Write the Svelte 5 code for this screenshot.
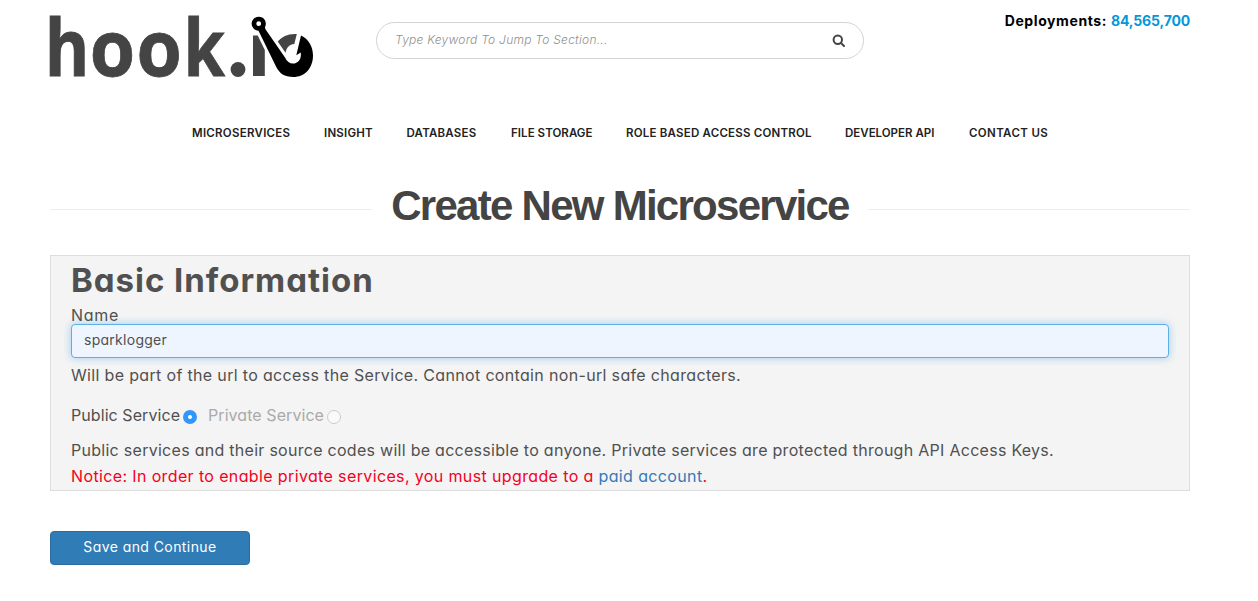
<script>
  const nav = [
    { label: 'MICROSERVICES', width: 98, spacing: 0.27 },
    { label: 'INSIGHT', width: 48.5, spacing: 0.2 },
    { label: 'DATABASES', width: 70.5, spacing: 0.22 },
    { label: 'FILE STORAGE', width: 81, spacing: 0.06 },
    { label: 'ROLE BASED ACCESS CONTROL', width: 185, spacing: 0.22 },
    { label: 'DEVELOPER API', width: 90, spacing: 0 },
    { label: 'CONTACT US', width: 79, spacing: 0.37 }
  ];
  const letters = [
    { c: 'h', x: 44.8, s: 0.87 },
    { c: 'o', x: 89.8, s: 0.94 },
    { c: 'o', x: 136.6, s: 0.94 },
    { c: 'k', x: 183.4, s: 0.86 }
  ];
  let name = $state('sparklogger');
  let keyword = $state('');
  let visibility = $state('public');
</script>

<div class="page">
  <header>
    <svg class="logo" viewBox="50 10 270 72" width="270" height="72" aria-label="hook.io">
      {#each letters as l}
        <text transform="translate({l.x} 76) scale({l.s} 1)">{l.c}</text>
      {/each}
      <g fill="#444">
        <circle cx="238" cy="69.5" r="7.4" />
        <path d="M253 35.5H257.7L264.8 50V76H253Z" />
        <path d="M277.7 41.5C282 36.5 288 33.5 296.8 34L294.3 44C289.500 44 286.500 47.500 285.500 52.800Z" />
      </g>
      <path fill-rule="evenodd" d="M258.700 16.700a7 7 0 0 1 6.300 10.300l.3 2L285 57.500C287 61.500 289.500 63.500 293 63.500C298.500 63.300 301.700 58.500 300.700 52.500L296.300 55.300L301 35.500C308.500 39 313 46.500 313 55.500C313 68.500 304.500 77 293.300 77C284.500 77 279.500 73.500 276 66.500L258.500 30.700a7 7 0 0 1 .2-14Zm0 4.600a2.400 2.400 0 1 0 0 4.800a2.400 2.400 0 0 0 0-4.800Z" />
    </svg>
    <label class="search">
      <input bind:value={keyword} placeholder="Type Keyword To Jump To Section..." />
      <svg viewBox="0 0 13 13" width="13" height="13"><circle cx="5.800" cy="5.800" r="4.200" /><path d="M8.900 8.900L12 12" /></svg>
    </label>
    <div class="deploy">Deployments: <span>84,565,700</span></div>
  </header>

  <nav>
    {#each nav as item}
      <a href="#top" style="width:{item.width}px;letter-spacing:{item.spacing}px">{item.label}</a>
    {/each}
  </nav>

  <div class="heading"><i></i><h1>Create New Microservice</h1><i></i></div>

  <section>
    <h2>Basic Information</h2>
    <label class="name" for="name">Name</label>
    <input id="name" class="field" bind:value={name} />
    <p class="hint">Will be part of the url to access the Service. Cannot contain non-url safe characters.</p>
    <div class="radios">
      <label class="public"><span>Public Service</span><input type="radio" value="public" bind:group={visibility} /></label>
      <label class="private"><span>Private Service</span><input type="radio" value="private" disabled bind:group={visibility} /></label>
    </div>
    <p class="about">Public services and their source codes will be accessible to anyone. Private services are protected through API Access Keys.</p>
    <p class="notice">Notice: In order to enable private services, you must upgrade to a <a href="#top">paid account</a>.</p>
  </section>

  <button>Save and Continue</button>
</div>

<style>
  :global(body) { margin: 0; background: #fff; }
  .page { box-sizing: border-box; width: 1258px; height: 601px; padding: 10px 68px 0 50px; font-family: Inter, sans-serif; font-feature-settings: "cv11"; color: #505050; white-space: nowrap; }
  header { display: flex; align-items: flex-start; height: 112px; }
  .logo { flex: none; overflow: visible; }
  .logo text { font: 700 78px "Open Sans", sans-serif; fill: #444; stroke: #444; stroke-width: 0.8; }
  .search { box-sizing: border-box; display: flex; align-items: center; width: 488px; height: 37px; margin: 12px 0 0 56px; padding: 0 18px; border: 1px solid #d4d4d4; border-radius: 19px; }
  .search input { flex: 1; min-width: 0; border: 0; outline: 0; padding: 0 0 2px; background: none; font: italic 300 12px Inter, sans-serif; font-feature-settings: "cv11"; letter-spacing: 0.25px; color: #505050; }
  .search input::placeholder { color: #909090; opacity: 1; }
  .search svg { fill: none; stroke: #444; stroke-width: 2; stroke-linecap: round; }
  .deploy { margin-left: auto; font-size: 14px; font-weight: 700; line-height: 22px; letter-spacing: 0.6px; color: #000; }
  .deploy span { color: #0597d8; letter-spacing: -0.15px; }
  nav { display: flex; gap: 34px; padding-left: 142px; height: 22px; line-height: 22px; }
  nav a { font-size: 11.5px; font-weight: 600; color: #222; text-decoration: none; }
  .heading { display: flex; align-items: center; justify-content: space-between; height: 50px; margin-top: 37px; }
  .heading i { width: 322px; height: 1px; margin-top: 7px; background: #ededed; }
  h1 { margin: 0; font: 700 42px/50px "Liberation Sans", sans-serif; letter-spacing: -1.73px; color: #444; }
  section { box-sizing: border-box; height: 236px; margin-top: 24px; padding: 0 20px; border: 1px solid #ddd; background: #f4f4f4; font-size: 16px; }
  h2 { margin: 0; font-size: 33px; font-weight: 700; line-height: 48px; letter-spacing: 0.97px; }
  .name { display: block; height: 20px; line-height: 22px; letter-spacing: 0.7px; }
  .field { display: block; box-sizing: border-box; width: 100%; height: 34px; padding: 0 12px 3px; border: 1px solid #5bb0e8; border-radius: 4px; outline: 0; background: #eef5fe; box-shadow: 0 0 8px rgba(102, 175, 233, .6); color: #505050; font: 14px Inter, sans-serif; font-feature-settings: "cv11"; letter-spacing: 0.27px; }
  p { margin: 0; line-height: 26px; }
  .hint { margin-top: 4px; letter-spacing: 0.335px; }
  .radios { display: flex; height: 26px; margin-top: 14px; line-height: 26px; letter-spacing: 0.07px; }
  .radios label { display: flex; align-items: center; }
  .radios input { appearance: none; box-sizing: border-box; width: 14px; height: 14px; margin: 3px 0 0; border: 1px solid #ccc; border-radius: 50%; background: #fafafa; }
  .radios input:checked { border: 5px solid #3297fd; background: #fff; }
  .radios .public { width: 126px; margin-right: 11px; justify-content: space-between; }
  .radios .private { width: 133px; justify-content: space-between; color: #aaa; }
  .about { margin-top: 9px; letter-spacing: 0.278px; }
  .notice { color: #f5001d; letter-spacing: 0.37px; }
  .notice a { color: #337ab7; text-decoration: none; }
  button { display: block; width: 200px; height: 34px; margin-top: 40px; padding: 0 0 3px; border: 1px solid #2e6da4; border-radius: 4px; background: #307cb6; color: #fff; font: 14px Inter, sans-serif; font-feature-settings: "cv11"; letter-spacing: 0.42px; }
</style>
